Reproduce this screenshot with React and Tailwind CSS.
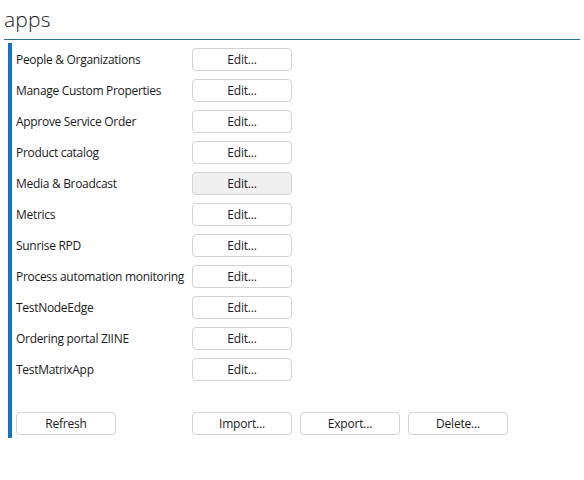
const apps = [
  "People & Organizations",
  "Manage Custom Properties",
  "Approve Service Order",
  "Product catalog",
  "Media & Broadcast",
  "Metrics",
  "Sunrise RPD",
  "Process automation monitoring",
  "TestNodeEdge",
  "Ordering portal ZIINE",
  "TestMatrixApp",
];

function Btn({ children, active }) {
  return (
    <button
      className={`block h-[23px] w-[100px] rounded-[4px] border border-[#d4d4d4] text-[12px] leading-[21px] tracking-[-0.2px] text-[#1a1a1a] ${
        active ? "bg-[#f0f0f0]" : "bg-white"
      }`}
    >
      {children}
    </button>
  );
}

export default function App() {
  return (
    <div className="h-[480px] w-[584px] bg-white font-['Open_Sans','Noto_Sans',sans-serif] text-[#1a1a1a]">
      <div className="px-[4px] pt-[4px]">
        <h1 className="h-[35px] text-[21px] font-light leading-[30px] tracking-[0.2px]">apps</h1>
        <div className="h-[1px] w-[576px] bg-[#2a7298]" />
      </div>
      <div className="ml-[8px] mt-[3px] flex w-[576px] border-l-[4px] border-[#1672c4]">
        <div className="flex w-full flex-col pl-[4px] pt-[5px] pb-[3px]">
          {apps.map((name, i) => (
            <div key={name} className="flex h-[31px] items-start">
              <span className="w-[176px] pt-[3px] text-[12px] leading-[18px] tracking-[-0.3px] whitespace-nowrap">{name}</span>
              <Btn active={i === 4}>Edit...</Btn>
            </div>
          ))}
          <div className="mt-[23px] flex items-start">
            <div className="w-[176px]">
              <Btn>Refresh</Btn>
            </div>
            <Btn>Import...</Btn>
            <div className="ml-[8px]">
              <Btn>Export...</Btn>
            </div>
            <div className="ml-[8px]">
              <Btn>Delete...</Btn>
            </div>
          </div>
        </div>
      </div>
    </div>
  );
}
